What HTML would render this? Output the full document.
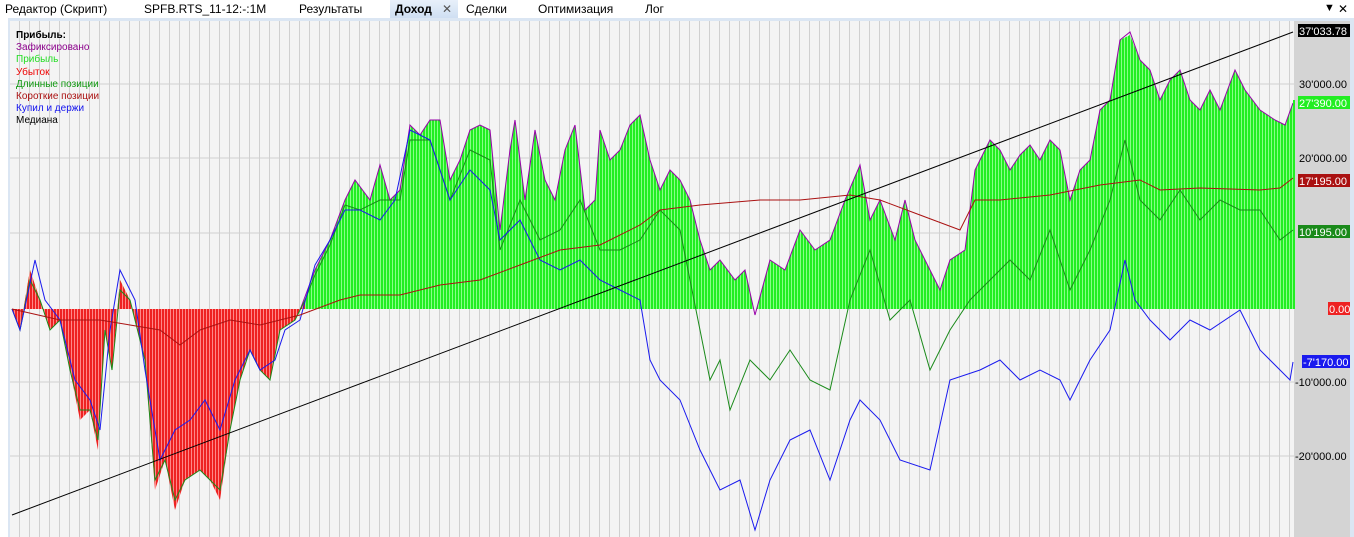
<!DOCTYPE html>
<html><head><meta charset="utf-8"><style>
body{margin:0;width:1354px;height:537px;overflow:hidden;background:#fff;font-family:"Liberation Sans","DejaVu Sans",sans-serif;}
.tabs{position:absolute;left:0;top:0;width:1354px;height:18px;font-size:12px;}
.tabs span{position:absolute;top:2px;color:#000;}
.sel{position:absolute;left:390px;top:0;width:68px;height:18px;background:linear-gradient(#e8f0fa,#cfdff2);}
svg{position:absolute;left:0;top:0}
.lg{position:absolute;left:16px;top:30px;font-size:10px;line-height:12.2px;}
</style></head><body>
<div class="tabs">
<div class="sel"></div>
<span style="left:5px">Редактор (Скрипт)</span>
<span style="left:144px">SPFB.RTS_11-12:-:1M</span>
<span style="left:299px">Результаты</span>
<span style="left:395px;font-weight:bold">Доход</span>
<span style="left:442px;color:#555">✕</span>
<span style="left:466px">Сделки</span>
<span style="left:538px">Оптимизация</span>
<span style="left:645px">Лог</span>
<span style="left:1324px;font-size:11px">▼</span>
<span style="left:1338px">✕</span>
</div>
<svg width="1354" height="537" viewBox="0 0 1354 537">
<defs>
<pattern id="vg" width="10" height="537" patternUnits="userSpaceOnUse" x="10"><rect width="10" height="537" fill="#f4f4f4"/><rect x="9" width="1" height="537" fill="#d0d0d0"/></pattern>
<pattern id="gp" width="3" height="537" patternUnits="userSpaceOnUse"><rect width="3" height="537" fill="#22ee22"/><rect x="2" width="1" height="537" fill="#88ff88"/></pattern>
<pattern id="rp" width="3" height="537" patternUnits="userSpaceOnUse"><rect width="3" height="537" fill="#ee2222"/><rect x="2" width="1" height="537" fill="#ff8888"/></pattern>
<clipPath id="up"><rect x="0" y="0" width="1294" height="309"/></clipPath>
<clipPath id="dn"><rect x="0" y="309" width="1294" height="300"/></clipPath>
</defs>
<rect x="8" y="18" width="1346" height="519" fill="#dbe6f3"/>
<rect x="10" y="21" width="1284" height="516" fill="url(#vg)"/>
<rect x="1294" y="21" width="56" height="516" fill="#d4d4d4"/>
<g stroke="#d0d0d0" stroke-width="1">
<line x1="10" y1="84" x2="1294" y2="84"/><line x1="10" y1="158" x2="1294" y2="158"/><line x1="10" y1="233" x2="1294" y2="233"/><line x1="10" y1="382" x2="1294" y2="382"/><line x1="10" y1="456" x2="1294" y2="456"/>
</g>
<polygon id="pf" points="12,309 20,330 30,270 40,300 50,330 60,320 70,370 80,420 90,410 98,450 105,330 112,370 120,280 130,300 135,320 145,360 155,490 165,460 175,510 185,480 200,470 210,480 220,500 230,430 240,380 250,350 260,370 270,380 280,330 295,320 305,300 315,270 330,240 345,200 355,180 370,200 380,165 390,200 400,190 410,125 420,135 430,120 440,120 450,180 460,160 470,130 480,125 490,130 500,230 510,150 515,120 525,200 535,130 545,180 555,200 565,150 575,125 585,210 595,200 600,130 610,160 620,150 630,125 640,115 650,160 660,190 670,170 680,180 690,200 700,240 710,270 720,260 735,280 745,270 755,315 770,260 785,270 800,230 815,250 830,240 845,200 860,165 870,220 880,200 895,240 905,200 915,240 930,270 940,290 950,260 965,250 975,170 990,140 1000,150 1010,170 1020,155 1030,145 1040,160 1050,140 1060,150 1070,200 1080,170 1090,160 1100,110 1110,100 1120,40 1130,35 1140,60 1150,70 1160,100 1170,80 1180,70 1190,100 1200,110 1210,90 1220,110 1235,70 1245,90 1260,110 1275,120 1285,125 1293,103 1293,309" fill="url(#gp)" clip-path="url(#up)"/>
<use href="#pf" fill="url(#rp)" clip-path="url(#dn)"/>
<polygon points="12,309 20,330 30,270 40,300 50,330 60,320 70,370 80,420 90,410 98,450 105,330 112,370 120,280 130,300 135,320 145,360 155,490 165,460 175,510 185,480 200,470 210,480 220,500 230,430 240,380 250,350 260,370 270,380 280,330 295,320 305,300 305,309" fill="url(#rp)"/>
<polyline fill="none" stroke="#9900aa" stroke-width="1" points="300,310 315,270 330,240 345,200 355,180 370,200 380,165 390,200 400,190 410,125 420,135 430,120 440,120 450,180 460,160 470,130 480,125 490,130 500,230 510,150 515,120 525,200 535,130 545,180 555,200 565,150 575,125 585,210 595,200 600,130 610,160 620,150 630,125 640,115 650,160 660,190 670,170 680,180 690,200 700,240 710,270 720,260 735,280 745,270 755,315 770,260 785,270 800,230 815,250 830,240 845,200 860,165 870,220 880,200 895,240 905,200 915,240 930,270 940,290 950,260 965,250 975,170 990,140 1000,150 1010,170 1020,155 1030,145 1040,160 1050,140 1060,150 1070,200 1080,170 1090,160 1100,110 1110,100 1120,40 1130,32 1140,60 1150,70 1160,100 1170,80 1180,70 1190,100 1200,110 1210,90 1220,110 1235,70 1245,90 1260,110 1275,120 1285,125 1293,103"/>
<rect x="1293" y="100" width="2" height="209" fill="#22ee22"/>
<polyline fill="none" stroke="#1a8a1a" stroke-width="1" points="12,309 20,330 30,280 40,300 50,330 60,320 70,370 80,410 90,410 98,440 105,330 112,370 120,290 130,300 145,360 155,480 165,460 175,500 185,480 200,470 210,480 220,490 230,430 240,380 250,350 260,370 270,380 280,330 295,320 305,300 315,275 330,245 345,205 360,210 380,200 400,200 410,140 430,140 450,200 470,150 490,160 500,250 520,200 540,240 560,230 580,200 600,250 620,250 640,240 660,210 680,230 700,330 710,380 720,360 730,410 750,360 770,380 790,350 810,380 830,390 850,300 870,250 890,320 910,300 930,370 950,330 970,300 990,280 1010,260 1030,280 1050,230 1070,290 1090,250 1110,200 1125,140 1140,200 1160,220 1180,190 1200,220 1220,200 1240,210 1260,210 1280,240 1293,230"/>
<polyline fill="none" stroke="#1a1aee" stroke-width="1" points="12,309 20,330 35,260 45,300 60,320 75,380 90,400 100,430 110,330 120,270 135,300 145,370 160,460 175,430 190,420 205,400 220,430 235,380 250,350 260,370 275,360 285,330 300,320 315,265 330,240 345,210 360,210 380,220 395,200 410,130 430,140 450,200 470,170 490,190 500,240 520,220 540,260 560,270 580,260 600,280 620,290 640,300 650,360 660,380 680,400 700,450 720,490 740,480 755,530 770,480 790,440 810,430 830,480 850,420 860,400 880,420 900,460 930,470 950,380 980,370 1000,360 1020,380 1040,370 1060,380 1070,400 1090,360 1110,330 1125,260 1135,300 1150,320 1170,340 1190,320 1210,330 1240,310 1260,350 1290,380 1293,362"/>
<polyline fill="none" stroke="#aa1111" stroke-width="1" points="12,309 60,320 100,320 130,325 160,330 180,345 200,330 230,320 260,325 300,315 340,300 360,295 400,295 440,285 480,280 520,265 560,250 600,245 640,225 660,210 700,205 760,200 800,200 850,195 880,200 920,215 960,230 975,200 1000,200 1050,195 1100,185 1140,180 1160,190 1200,188 1260,190 1280,188 1293,178"/>
<line x1="12" y1="515" x2="1293" y2="32" stroke="#000" stroke-width="1"/>
<g font-size="11" font-family="Liberation Sans,sans-serif">
<rect x="1298" y="24" width="52" height="13" fill="#000"/><text x="1299" y="35" fill="#fff">37'033.78</text>
<text x="1299" y="88" fill="#000">30'000.00</text>
<rect x="1298" y="96" width="52" height="13" fill="#22ee22"/><text x="1299" y="107" fill="#fff">27'390.00</text>
<text x="1299" y="162" fill="#000">20'000.00</text>
<rect x="1298" y="174" width="52" height="13" fill="#aa1111"/><text x="1299" y="185" fill="#fff">17'195.00</text>
<rect x="1298" y="225" width="52" height="13" fill="#1a8a1a"/><text x="1299" y="236" fill="#fff">10'195.00</text>
<rect x="1328" y="302" width="22" height="13" fill="#ee2222"/><text x="1329" y="313" fill="#fff">0.00</text>
<rect x="1302" y="355" width="48" height="13" fill="#1a1aee"/><text x="1303" y="366" fill="#fff">-7'170.00</text>
<text x="1295" y="386" fill="#000">-10'000.00</text>
<text x="1295" y="460" fill="#000">-20'000.00</text>
</g>
</svg>
<div class="lg">
<div style="font-weight:bold">Прибыль:</div>
<div style="color:#8b008b">Зафиксировано</div>
<div style="color:#22dd22">Прибыль</div>
<div style="color:#ee0000">Убыток</div>
<div style="color:#119911">Длинные позиции</div>
<div style="color:#aa1111">Короткие позиции</div>
<div style="color:#1111ee">Купил и держи</div>
<div style="color:#000">Медиана</div>
</div>
</body></html>
